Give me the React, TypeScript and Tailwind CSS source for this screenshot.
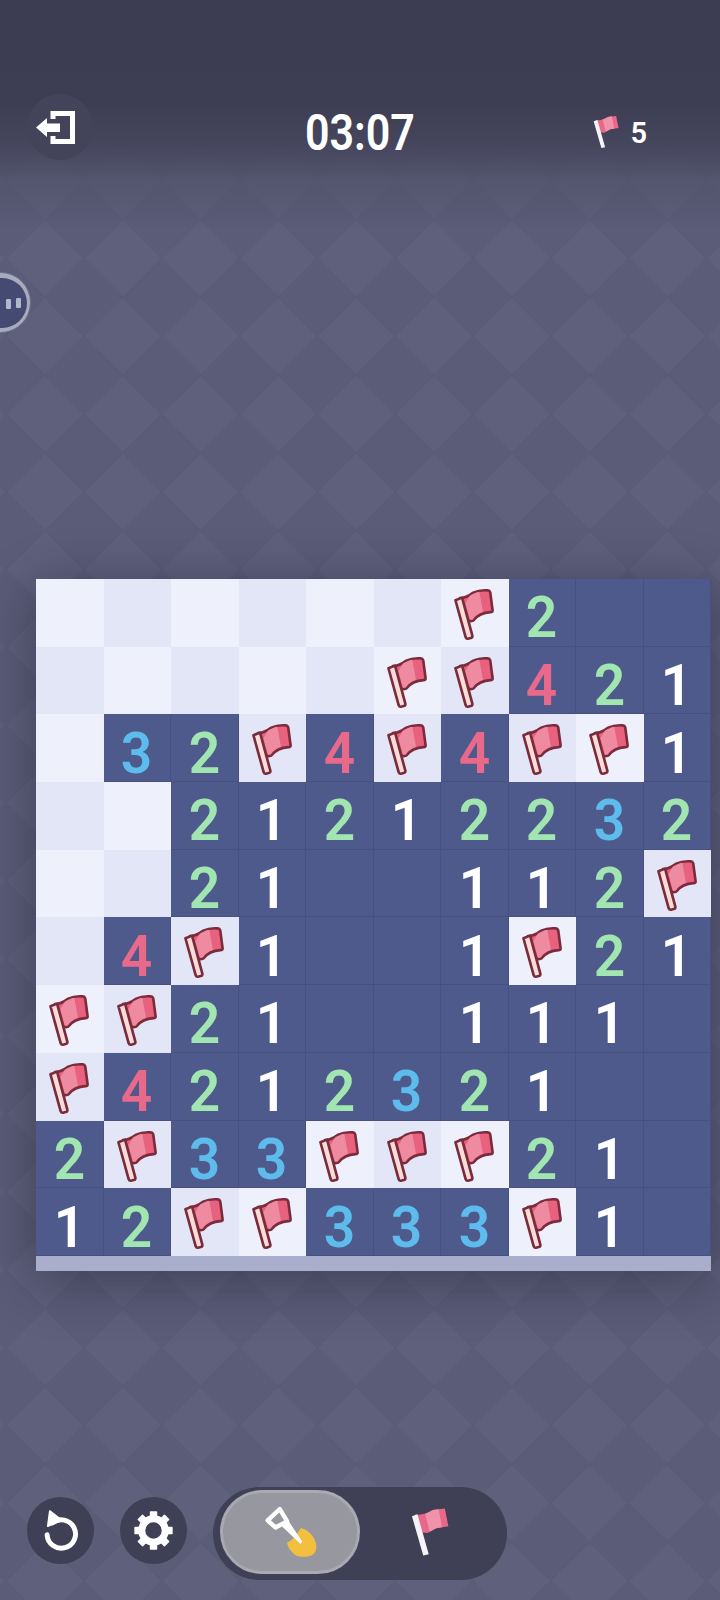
const board = [
  "......F2__",
  ".....FF421",
  ".32F4F4FF1",
  "..21212232",
  "..21__112F",
  ".4F1__1F21",
  "FF21__111_",
  "F4212321__",
  "2F33FFF21_",
  "12FF333F1_",
];

const digitColor: Record<string, string> = {
  "1": "text-white",
  "2": "text-[#a1e5b0]",
  "3": "text-[#5dbcec]",
  "4": "text-[#e9698a]",
};

function Flag() {
  return (
    <svg viewBox="36 54 126 160" className="w-[42px] h-[53px] ml-[11px] mt-[9px]">
      <path
        d="M60 84C74 86 86 78 100 68C112 62 130 60 144 61Q149 61 151 67L158 120Q159 127 152 127C130 128 114 134 100 152Q90 156 84 152Z"
        fill="#e8617e"
        stroke="#7a2c3c"
        strokeWidth="8"
        strokeLinejoin="round"
      />
      <path d="M90 77C100 71 108 67 118 65L129 126C116 130 106 138 98 149L90 150L76 100Z" fill="#ef8ba0" />
      <path
        d="M46 91L66 83L97 198Q98 204 92 205L84 207Q79 208 77 203Z"
        fill="#fbdcd8"
        stroke="#7a2c3c"
        strokeWidth="8"
        strokeLinejoin="round"
      />
    </svg>
  );
}

function PlainFlag({ className }: { className: string }) {
  return (
    <svg viewBox="1232 138 118 154" className={className}>
      <path d="M1245 160C1262 165 1280 158 1300 147L1337 142L1348 197L1310 203L1283 218L1262 216Z" fill="#e9688a" />
      <path d="M1276 158C1284 156 1292 151 1300 147L1318 144L1328 200L1310 203L1290 214Z" fill="#f092aa" />
      <path d="M1235 166L1252 160L1287 284L1270 288Z" fill="#f6f4f8" />
    </svg>
  );
}

function ExitIcon() {
  return (
    <svg viewBox="0 0 40 33" className="w-10 h-[33px] mr-[8px]">
      <path d="M17 8V2.5H36.5V30.5H17V25" fill="none" stroke="#fff" strokeWidth="5" />
      <path d="M0 16.5L11 7V12.5H24V21H11V26Z" fill="#fff" />
    </svg>
  );
}

function ResetIcon() {
  return (
    <svg viewBox="0 0 120 130" className="w-10 h-[43px]">
      <path
        d="M34 42A43 43 0 1 1 18 78"
        fill="none"
        stroke="#fff"
        strokeWidth="15"
        strokeLinecap="round"
      />
      <path d="M26 6L62 34L20 52Z" fill="#fff" stroke="#fff" strokeWidth="5" strokeLinejoin="round" />
    </svg>
  );
}

function GearIcon() {
  const teeth = [0, 45, 90, 135, 180, 225, 270, 315];
  return (
    <svg viewBox="0 0 116 116" className="w-[39px] h-[39px]">
      <circle cx="58" cy="58" r="35" fill="none" stroke="#fff" strokeWidth="21" />
      {teeth.map((deg) => (
        <rect key={deg} x="47" y="1" width="22" height="20" rx="2" fill="#fff" transform={`rotate(${deg} 58 58)`} />
      ))}
    </svg>
  );
}

function ShovelIcon() {
  return (
    <svg viewBox="70 70 170 170" className="w-[57px] h-[57px]">
      <path
        d="M185 145C205 145 235 175 232 205C230 228 205 235 175 228C160 222 145 200 145 188Q165 180 185 145Z"
        fill="#f2bf3e"
      />
      <path d="M130 140L150 125L190 185L185 192Z" fill="#fff" />
      <path d="M87 122L123 88L145 125L110 143Z" fill="none" stroke="#fff" strokeWidth="13" strokeLinejoin="round" />
    </svg>
  );
}

function Cell({ value, row, col }: { value: string; row: number; col: number }) {
  if (value === "." || value === "F") {
    return (
      <div className={`h-[67.7px] ${(row + col) % 2 === 0 ? "bg-[#eef1fb]" : "bg-[#e2e6f6]"}`}>
        {value === "F" && <Flag />}
      </div>
    );
  }
  return (
    <div className="h-[67.7px] bg-[#4f5a8c] border-r border-b border-[#47507f] flex items-center justify-center pt-[10px]">
      {value !== "_" && (
        <span className={`text-[58px] leading-none font-semibold scale-x-[0.95] ${digitColor[value]}`}>{value}</span>
      )}
    </div>
  );
}

export default function App() {
  return (
    <div className="relative w-[720px] h-[1600px] overflow-hidden bg-[#5e607c] font-['Roboto',sans-serif]">
      {/* background texture */}
      <svg className="absolute inset-0 w-full h-full" width="720" height="1600">
        <defs>
          <pattern id="tile" x="45" y="25" width="77.8" height="77.8" patternUnits="userSpaceOnUse">
            <path d="M38.9 0L77.8 38.9L38.9 77.8L0 38.9Z" fill="#5a5c78" stroke="#585a75" strokeWidth="1" />
          </pattern>
        </defs>
        <rect width="720" height="1600" fill="url(#tile)" />
      </svg>
      <div className="absolute inset-x-0 top-0 h-[230px] bg-[linear-gradient(to_bottom,#3c3c52_0%,#3d3d53_45%,#45455d_62%,rgba(80,81,105,0.75)_78%,rgba(95,97,125,0)_100%)]" />

      {/* floating bubble */}
      <div className="absolute left-[-30px] top-[272px] w-[61px] h-[61px] rounded-full bg-[#a9abbd] border border-[#6d6f8c] flex items-center justify-end pr-[3px]">
        <div className="w-[50px] h-[50px] rounded-full bg-[#454a73] flex items-center justify-end gap-[5px] pr-[6px]">
          <div className="w-[5px] h-[10px] rounded-[1px] bg-[#b3b5c9] mt-[3px]" />
          <div className="w-[5px] h-[10px] rounded-[1px] bg-[#b3b5c9]" />
        </div>
      </div>

      <div className="relative flex flex-col">
        {/* top bar */}
        <div className="grid grid-cols-[1fr_auto_1fr] items-center pt-[94px] px-[27px]">
          <div className="w-[66px] h-[66px] rounded-full bg-[#43435a] flex items-center justify-center">
            <ExitIcon />
          </div>
          <div className="text-white text-[50px] leading-none font-semibold scale-x-[0.86] pt-[12px]">03:07</div>
          <div className="flex items-center justify-end gap-[11px] pr-[46px] pt-[9px]">
            <PlainFlag className="w-[26px] h-[34px]" />
            <span className="text-white text-[29px] leading-none font-semibold pt-[3px]">5</span>
          </div>
        </div>

        {/* board */}
        <div className="w-[675px] ml-9 mt-[419px] shadow-[0_10px_50px_rgba(25,25,40,0.45)]">
          <div className="grid grid-cols-10">
            {board.map((line, r) =>
              line.split("").map((v, c) => <Cell key={`${r}-${c}`} value={v} row={r} col={c} />),
            )}
          </div>
          <div className="h-[15px] bg-[#a8aecb]" />
        </div>

        {/* tools */}
        <div className="flex items-center gap-[26px] ml-[27px] mt-[216px]">
          <div className="w-[67px] h-[67px] mb-[6px] rounded-full bg-[#3f3f55] flex items-center justify-center">
            <ResetIcon />
          </div>
          <div className="w-[67px] h-[67px] mb-[6px] rounded-full bg-[#3f3f55] flex items-center justify-center">
            <GearIcon />
          </div>
          <div className="w-[294px] h-[93px] rounded-full bg-[#3f3f55] flex items-center pl-[7px]">
            <div className="w-[140px] h-[84px] mb-[3px] rounded-full bg-[#97979f] border-[3px] border-[#a9a9b3] flex items-center justify-center">
              <ShovelIcon />
            </div>
            <div className="flex-1 flex justify-center pr-[8px]">
              <PlainFlag className="w-[38px] h-[50px] mb-[3px]" />
            </div>
          </div>
        </div>
      </div>
    </div>
  );
}
